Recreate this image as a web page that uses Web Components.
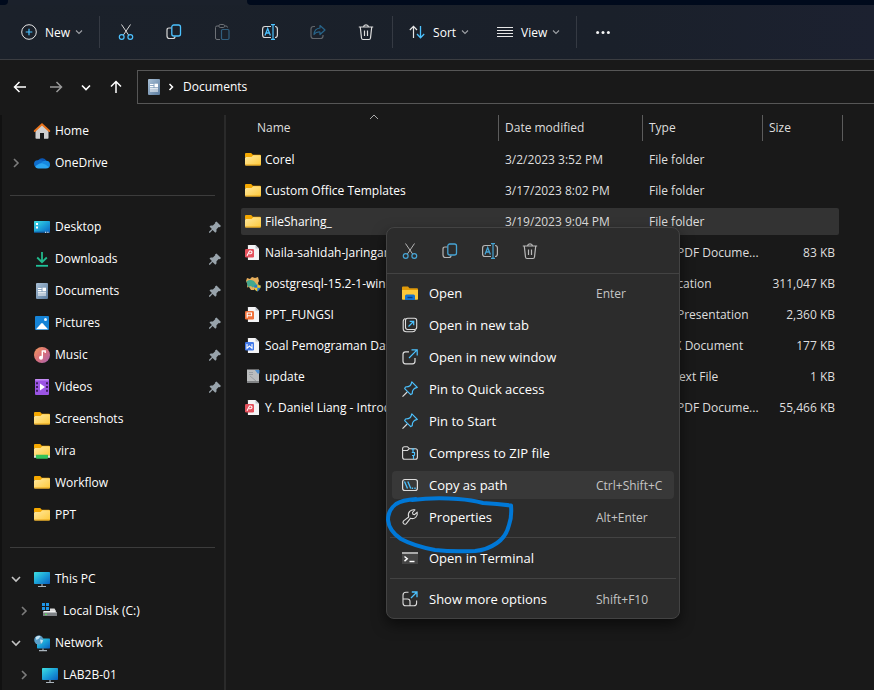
<!DOCTYPE html>
<html lang="en">
<head>
<meta charset="utf-8">
<title>Documents</title>
<style>
html, body { height: 100%; }
body { margin: 0; background: #191919; color: #fff; font: 12px/16px "Open Sans", "Noto Sans", sans-serif; overflow: hidden; }
</style>
</head>
<body>
<explorer-window>
  <tab-strip slot="tabs"></tab-strip>
  <command-bar slot="commands">
    <command-button icon="new" chevron>New</command-button>
    <bar-divider></bar-divider>
    <command-button icon="cut" label="Cut"></command-button>
    <command-button icon="copy" label="Copy"></command-button>
    <command-button icon="paste" label="Paste" dim></command-button>
    <command-button icon="rename" label="Rename"></command-button>
    <command-button icon="share" label="Share" dim></command-button>
    <command-button icon="trash" label="Delete"></command-button>
    <bar-divider></bar-divider>
    <command-button icon="sort" chevron>Sort</command-button>
    <command-button icon="view" chevron>View</command-button>
    <bar-divider></bar-divider>
    <command-button icon="more" label="See more"></command-button>
  </command-bar>
  <address-bar slot="address">Documents</address-bar>
  <nav-pane slot="nav">
    <nav-item icon="home">Home</nav-item>
    <nav-item icon="onedrive" state="closed">OneDrive</nav-item>
    <nav-rule></nav-rule>
    <nav-item icon="desktop" pinned>Desktop</nav-item>
    <nav-item icon="download" pinned>Downloads</nav-item>
    <nav-item icon="document" pinned>Documents</nav-item>
    <nav-item icon="picture" pinned>Pictures</nav-item>
    <nav-item icon="music" pinned>Music</nav-item>
    <nav-item icon="video" pinned>Videos</nav-item>
    <nav-item icon="folder">Screenshots</nav-item>
    <nav-item icon="shared">vira</nav-item>
    <nav-item icon="folder">Workflow</nav-item>
    <nav-item icon="folder">PPT</nav-item>
    <nav-rule></nav-rule>
    <nav-item icon="pc" state="open">This PC</nav-item>
    <nav-item icon="disk" state="closed" nested>Local Disk (C:)</nav-item>
    <nav-item icon="network" state="open">Network</nav-item>
    <nav-item icon="pc" state="closed" nested>LAB2B-01</nav-item>
  </nav-pane>
  <file-list></file-list>
  <context-menu slot="overlay">
    <menu-tool slot="tools" icon="cut" label="Cut"></menu-tool>
    <menu-tool slot="tools" icon="copy" label="Copy"></menu-tool>
    <menu-tool slot="tools" icon="rename" label="Rename"></menu-tool>
    <menu-tool slot="tools" icon="trash" label="Delete"></menu-tool>
    <menu-rule></menu-rule>
    <menu-item icon="openfolder" keys="Enter">Open</menu-item>
    <menu-item icon="newtab">Open in new tab</menu-item>
    <menu-item icon="newwindow">Open in new window</menu-item>
    <menu-item icon="pin">Pin to Quick access</menu-item>
    <menu-item icon="pin">Pin to Start</menu-item>
    <menu-item icon="zip">Compress to ZIP file</menu-item>
    <menu-item icon="path" keys="Ctrl+Shift+C" active>Copy as path</menu-item>
    <menu-item icon="wrench" keys="Alt+Enter">Properties</menu-item>
    <menu-rule></menu-rule>
    <menu-item icon="terminal">Open in Terminal</menu-item>
    <menu-rule></menu-rule>
    <menu-item icon="moreoptions" keys="Shift+F10">Show more options</menu-item>
    <ink-loop slot="ink"></ink-loop>
  </context-menu>
</explorer-window>

<script>
const B = '#4cc2ff';
const folder = '<g transform="translate(0 -1)"><path d="M0 3q0-1 1-1h5.2l1.6 1.7H15q1 0 1 1V6H0z" fill="#f5a800"/><path d="M0 13.5V7q0-1 1-1h5.5L8.3 4.3H15q1 0 1 1v8.2q0 1-1 1H1q-1 0-1-1z" fill="url(#f)"/><path d="M0 13.6h16q0 .9-1 .9H1q-1 0-1-.9z" fill="#e3a21a"/></g><defs><linearGradient id="f" x2="1" y2="1"><stop stop-color="#ffe9a2"/><stop offset="1" stop-color="#fdc93a"/></linearGradient></defs>';
const sheet = (c, mark) => `<path d="M3.500 0h7L14 3.500V14.400q0 .6-.6.6H3.500q-.6 0-.6-.6V.6Q2.900 0 3.500 0z" fill="#f4f4f6"/><path d="M10.500 0 14 3.500h-3.500z" fill="#bfc3ca"/><rect y="4" width="9" height="8.500" rx="1.300" fill="${c}"/><g fill="none" stroke="#fff" stroke-width="1.100">${mark}</g>`;
const screen = (x, y, w, h, id) => `<rect x="${x}" y="${y}" width="${w}" height="${h}" rx=".7" fill="url(#${id})"/><defs><linearGradient id="${id}" x2="1" y2="1"><stop stop-color="#3fe0e2"/><stop offset=".5" stop-color="#1ba1d8"/><stop offset="1" stop-color="#0a5fc0"/></linearGradient></defs>`;
const ICONS = {
  new: `<circle cx="8" cy="8" r="7.300" stroke="#e6e6e6"/><path d="M8 4.700v6.600M4.700 8h6.600" stroke="${B}" stroke-width="1.200"/>`,
  cut: `<path d="M3.500.5 10.600 11M12.500.5 5.400 11" stroke="#d8d8d8"/><circle cx="3.700" cy="13" r="2.400" stroke="${B}" stroke-width="1.200"/><circle cx="12.300" cy="13" r="2.400" stroke="${B}" stroke-width="1.200"/>`,
  copy: `<path d="M5.500 4H3Q1 4 1 6v6q0 2.500 2.500 2.500H7q2 0 2-2" stroke="#d8d8d8" stroke-width="1.200"/><rect x="5.800" y="1" width="8.700" height="11" rx="2" stroke="${B}" stroke-width="1.300"/>`,
  paste: `<path d="M6 15.500H3q-1.500 0-1.500-1.500V3.500Q1.500 2 3 2h2M10.500 2H12q1.500 0 1.500 1.500" stroke="#6d7176"/><rect x="5" y=".5" width="5.500" height="3" rx="1.200" stroke="#6d7176"/><rect x="7.500" y="5.500" width="7.500" height="10" rx="1.200" stroke="#315e7d" stroke-width="1.200"/>`,
  rename: `<path d="M9 2.500H3Q.6 2.500.6 5v6Q.6 13.500 3 13.500h6M13 2.500q2.400 0 2.400 2.500v6q0 2.500-2.400 2.500" stroke="#d8d8d8" stroke-width="1.200"/><path d="M9 .6h4M11 .6v14.800M9 15.400h4" stroke="${B}" stroke-width="1.200"/><path d="m3 11.500 2.700-7 2.700 7M4 9h3.400" stroke="${B}" stroke-width="1.300"/>`,
  share: `<path d="M5 2.500H3.500Q1 2.500 1 5v7q0 2.500 2.500 2.500h7Q13 14.500 13 12v-1" stroke="#62666b" stroke-width="1.200"/><path d="M10 1.500 15 6l-5 4.500V8q-4-.3-6 2.500.4-6 6-6.500z" stroke="#28658a" stroke-width="1.200" stroke-linejoin="round"/>`,
  trash: `<path d="M.8 3h14.400M5.500 2.800Q5.800.8 8 .8t2.500 2M2.300 3.200 3.500 14q.2 1.500 1.500 1.500h6q1.300 0 1.500-1.500l1.200-10.800M6.500 6.500v5.500M9.500 6.500v5.500" stroke="#dedede" stroke-width="1.200"/>`,
  sort: `<path d="M4.500 14V2.500M.8 6l3.700-3.700L8 6" stroke="#e6e6e6" stroke-width="1.200"/><path d="M11.500 2v11.500M8 10l3.500 3.700L15.200 10" stroke="${B}" stroke-width="1.300"/>`,
  view: '<path d="M0 3.500h16M0 6.500h16M0 9.500h16M0 12.500h16" stroke="#e6e6e6"/>',
  more: '<g fill="#f4f4f4"><circle cx="2.600" cy="8.500" r="1.500"/><circle cx="8" cy="8.500" r="1.500"/><circle cx="13.400" cy="8.500" r="1.500"/></g>',
  back: '<path d="M14 8H3M7.500 3 2.500 8l5 5" stroke="#fff" stroke-width="1.500"/>',
  forward: '<path d="M2 8h11M8.500 3l5 5-5 5" stroke="#9a9a9a" stroke-width="1.500"/>',
  down: '<path d="m4 6.500 4 4 4-4" stroke="#fff" stroke-width="1.600"/>',
  up: '<path d="M8 14V3M3 7.500l5-5 5 5" stroke="#fff" stroke-width="1.500"/>',
  crumb: '<path d="m6.500 5 3 3-3 3" stroke="#fff" stroke-width="1.500"/>',
  closed: '<path d="m6 4 4 4-4 4" stroke="#7c7c7c" stroke-width="1.600"/>',
  open: '<path d="m4 6 4 4 4-4" stroke="#c4c4c4" stroke-width="1.600"/>',
  chevron: '<path d="m5 6.500 3 3 3-3" stroke="#9ea1a6" stroke-width="1.100"/>',
  caret: '<path d="m4 10 4-4 4 4" stroke="#aaa"/>',
  thumb: '<path d="M9.500 2.500 14 7l-1.300 1.200-1-.2-2.200 2.300v2.200L8.300 13.700 5.600 11 3 13.700H2v-1L4.900 10 2.500 7.600 3.700 6.500h2.200l2.300-2.200-.2-.8z" fill="#98a3ab"/>',
  home: '<path d="M1.500 7.500 8 1.500l6.500 6V15q0 .8-.8.8H10V10H6v5.800H2.300q-.8 0-.8-.8z" fill="#cfcfcf"/><path d="M.7 8 8 1.300 15.300 8" stroke="#e8731c" stroke-width="1.900" stroke-linecap="round"/>',
  onedrive: '<path d="M4 9.500A3.800 3.800 0 0 1 4.300 5 5 5 0 0 1 12.500 6z" fill="#0a57b5"/><path d="M3.500 5.300Q0 5.500 0 9q0 2.500 2.500 4L13 8 9 6Q6 4.300 3.500 5.300z" fill="#0f6dcc"/><path d="M12.200 5.800Q16 6 16 9.800T12 13L7 8q2-2.500 5.200-2.200z" fill="#1688e0"/><path d="M1.200 11.800Q5 7.500 8 8.300T15 12q-1 1.500-3.300 1.500H4q-1.800 0-2.800-1.700z" fill="#2ba6f2"/>',
  desktop: screen(0, 2, 16, 12, 'd') + '<path d="M2 4h2v2H2zM2 7.500h2v2H2z" fill="#fff"/><path d="M0 12.700h16V14H0z" fill="#12508c"/><path d="M11 12.800h1.200v1H11zM13.300 12.800h1.200v1h-1.200z" fill="#fff"/>',
  download: '<path d="M8 1v9.500M3.200 6.500 8 11.200l4.800-4.700" stroke="#22b98c" stroke-width="1.800"/><path d="M2 14.800h12" stroke="#1fc29a" stroke-width="1.800"/>',
  document: '<rect x="2" width="12" height="16" rx="1" fill="url(#g)"/><path d="M4 5.500h3.500M4 7.700h3.500M4 9.800h8M4 12h8" stroke="#fff" stroke-width="1.200"/><path d="M8.500 4.700H12v3.600H8.500z" fill="#fff"/><defs><linearGradient id="g" x2="1" y2="1"><stop stop-color="#a9c0d6"/><stop offset="1" stop-color="#5b7c9f"/></linearGradient></defs>',
  picture: '<rect x="1" y="1" width="14" height="14" rx="1" fill="#1583d6"/><path d="M2 14.300 7.200 8.500q.8-.8 1.600 0l5.200 5.800z" fill="#fff"/><circle cx="11.500" cy="4.500" r="1.500" fill="#e8f6ff"/>',
  music: '<circle cx="8" cy="8" r="8" fill="url(#m)"/><path d="M8.300 3.500v7M8.300 4h2.900v2" stroke="#fff" stroke-width="1.400"/><circle cx="7" cy="10.800" r="2" fill="#fff"/><defs><linearGradient id="m" x2="1" y2="1"><stop stop-color="#f29a5c"/><stop offset=".5" stop-color="#d9707a"/><stop offset="1" stop-color="#a763b5"/></linearGradient></defs>',
  video: '<rect x="1" width="14" height="16" rx="1" fill="#9b54e4"/><path d="M1 1q0-1 1-1h12q1 0 1 1v.6H1z" fill="#c58cf5"/><g fill="#3f2060"><path d="M2 3.200h2v2H2zM2 7h2v2H2zM2 10.800h2v2H2zM12 3.200h2v2h-2zM12 7h2v2h-2zM12 10.800h2v2h-2z"/></g><path d="m6 4.500 5 3.500-5 3.500z" fill="#fff"/>',
  folder,
  shared: folder + '<path d="M0 12.500h16v2.300H0z" fill="#d7e7db"/><path d="M2 11.700h12v3.300q0 .8-.8.800H2.800q-.8 0-.8-.8z" fill="#33c15a"/>',
  pc: screen(0, 1, 16, 12, 'p') + '<path d="M8 13v2.500M4 15.500h8" stroke="#aab4bd" stroke-width="1.200"/>',
  disk: '<path d="M0 0h3v3H0zM4 0h3v3H4zM0 4h3v3H0zM4 4h3v3H4z" fill="#1e96e8"/><path d="M1.500 8h12L15 10H1z" fill="#f0f0f0"/><path d="M8 5.500h4.500L14 8H8z" fill="#dcdcdc"/><rect x="1" y="9.500" width="14" height="3.500" rx=".6" fill="#7d8185"/><path d="M3 11.300h2" stroke="#54e05a" stroke-width="1.200"/>',
  network: screen(3, 3.5, 13, 10, 'n') + '<path d="M9 13.500v2M5 15.600h8" stroke="#aab4bd" stroke-width="1.100"/><circle cx="4.800" cy="5" r="4.600" fill="#5a9fc9"/><path d="M1.500 2.500q2-2.300 5-1.500L5 3.500 2.500 5zM6 4.500l3 .5q0 2.500-2 3.700z" fill="#c5e3f2"/>',
  pdf: sheet('#e4505c', '<path d="M2 10.800 4.500 6h1.200Q7 6 7 7.200T5.700 8.700H4"/>'),
  ppt: sheet('#f0713a', '<path d="M2.200 10.800V6h4.300v2.800H2.500"/>'),
  word: sheet('#4178e8', '<path d="M2 6v4.300L4.500 8 7 10.300V6"/>'),
  postgres: '<path d="M2 2 5 3l2-2 3 1 3-1 1 4-1 2 1 3-3 1-2 3H6l-2-3-2 .5.500-3.500L1 5z" fill="#e6ae5c"/><path d="M1.500 5.500Q5 3 9 5l3 4-2.500 1.500-2 1L6 10l-3 1z" fill="#43a88d"/><path d="M9 9.500q2.200 0 3.300-1 1.200 1 3.300 1 0 4.500-3.300 6-3.300-1.500-3.300-6z" fill="#2478cf"/><path d="M12.300 8.500q1.200 1 3.300 1v2.300h-3.300zM9.100 11.800h3.200v3.700Q9.800 14.500 9.100 11.800z" fill="#f6c928"/>',
  text: '<path d="M2 .5h12V14H2z" fill="#bbbdbe"/><path d="M4 3.500h4M4 5.500h4M5 7l6 5" stroke="#9a9ea1"/><path d="M10 1h4.500v3.500h-2z" fill="#4e8fd0"/><path d="M2 12h12v2H2z" fill="#808284"/>',
  openfolder: '<path d="M0 2.500q0-1 1-1h5l1.500 1.800H15q1 0 1 1V6H0z" fill="#e09a0a"/><path d="M0 5h16v9q0 .8-.8.800H.8Q0 14.800 0 14z" fill="#fdc93a"/><path d="M3 15V11q0-1.500 1.500-1.500h7Q13 9.500 13 11v4z" fill="#1673cd"/><path d="M5.500 12.500h5" stroke="#0a3f80" stroke-width="1.300"/>',
  newtab: `<path d="M3.500 1.500Q1.200 2 1.200 4.500v7q0 3.300 3.300 3.300h6q2.300 0 3-1.800" stroke="#ddd" stroke-width="1.100"/><rect x="3.500" y="1.300" width="11.200" height="11.200" rx="2.200" stroke="#ddd" stroke-width="1.100"/><path d="m6.500 9.500 5-5M7.700 4.300h4v4" stroke="${B}" stroke-width="1.200"/>`,
  newwindow: `<path d="M7 2.800H3.500Q1 2.800 1 5.300v7q0 2.500 2.500 2.500h7q2.500 0 2.500-2.500V9" stroke="#ddd" stroke-width="1.200"/><path d="M7 9 14.800 1.200M9.500.9h5.700v5.700" stroke="${B}" stroke-width="1.200"/>`,
  pin: `<path d="m5.200 11-4.700 4.600" stroke="#ddd" stroke-width="1.100"/><path d="M9.800.9q-.6 2.800-1.800 3.800T3.500 6L2.700 7.600l6 6 1.500-.9q0-3 1.300-4.400t3.800-1.900z" stroke="${B}" stroke-width="1.200" stroke-linejoin="round"/>`,
  zip: `<path d="M.6 12.300V3.700q0-2 2-2h2.800l2 2H13.400q2 0 2 2v6.600q0 2-2 2H2.600q-2 0-2-2zM.6 5.500h4.800l2-1.800" stroke="#ddd" stroke-width="1.100"/><path d="M9.500 4h3M11 4v3.500M9.800 7.500H13M12.500 7.500v3M10 10.500h2.500M11.500 10.500v3.500" stroke="${B}" stroke-width="1.200"/>`,
  path: `<rect x=".6" y="2.500" width="14.800" height="11" rx="2.200" stroke="#ddd" stroke-width="1.200"/><path d="m2.500 4.500 3 7M5.800 4.500l3 7" stroke="${B}" stroke-width="1.300"/><path d="M9.700 10.500h1.400V12H9.700zM12.300 10.500h1.400V12h-1.400z" fill="${B}"/>`,
  wrench: '<path d="M6.700 8Q5.600 4.800 7.700 2.400 9.900.2 12.900.9L10.500 3.500l.4 1.700 1.700.4 2.600-2.400q.7 3-1.500 5.100-2.300 2-5.300 1L4.300 14.600q-1.400 1.300-2.800.1-1.200-1.400.1-2.800z" stroke="#ddd" stroke-width="1.100" stroke-linejoin="round"/>',
  terminal: '<rect y="2" width="16" height="12" fill="#454545"/><path d="M0 2h16v2H0z" fill="#aaa"/><path d="m2.500 6.500 2.700 2.300-2.700 2.300" stroke="#fff" stroke-width="1.500"/><path d="M7.500 11.500h5" stroke="#fff" stroke-width="1.400"/>',
  moreoptions: `<path d="M6.500 1.300H4Q1 1.300 1 4.300V12q0 2.800 2.800 2.800h8q2.800 0 2.800-2.800V9.500M1 8h4.500Q8 8 8 10.500v4" stroke="#ddd" stroke-width="1.100"/><path d="M9 7 14.500 1.500M9.800 1h5.200v5.200" stroke="${B}" stroke-width="1.300"/>`
};

const define = (name, render) => customElements.define(name, class extends HTMLElement {
  constructor() { super(); this.attachShadow({ mode: 'open' }); }
  connectedCallback() { this.shadowRoot.innerHTML = render(this); }
});
const icon = name => `<app-icon name="${name}"></app-icon>`;
const attr = (el, name) => el.getAttribute(name) || '';
const RESET = '* { box-sizing: border-box; } button, a { font: inherit; color: inherit; background: none; border: 0; padding: 0; margin: 0; text-decoration: none; text-align: left; }';

define('app-icon', el => `<style>:host { display: block; flex: none; width: 16px; height: 16px; } svg { display: block; overflow: visible; }</style>
  <svg width="16" height="16" viewBox="0 0 16 16" fill="none" aria-hidden="true">${ICONS[attr(el, 'name')]}</svg>`);

define('explorer-window', () => `<style>
  :host { display: grid; grid-template: auto auto auto minmax(0, 1fr) / 226px minmax(0, 1fr); height: 100vh; position: relative; overflow: hidden; background: #191919; }
  .wide { grid-column: 1 / -1; }
  .nav { display: flex; min-height: 0; }
  .main { min-width: 0; padding: 2px 31px 0 15px; }
  </style>
  <div class="wide"><slot name="tabs"></slot></div>
  <div class="wide"><slot name="commands"></slot></div>
  <div class="wide"><slot name="address"></slot></div>
  <div class="nav"><slot name="nav"></slot></div>
  <main class="main"><slot></slot></main>
  <slot name="overlay"></slot>`);

define('tab-strip', () => `<style>
  :host { display: flex; height: 5px; background: #1b212b; }
  i { background: #000a1c; }
  .a { width: 8px; border-radius: 0 0 4px 0; }
  .tab { width: 239px; background: none; }
  .b { flex: 1; border-radius: 0 0 0 4px; }
  </style><i class="a"></i><i class="tab"></i><i class="b"></i>`);

define('command-bar', () => `<style>
  :host { display: flex; align-items: center; gap: 4px; height: 55px; box-sizing: border-box; padding-left: 9px; border-bottom: 1px solid #3b3d41; background: linear-gradient(90deg, #1b212a, #1a202a 70%, #1c2130); }
  </style><slot></slot>`);

define('bar-divider', () => `<style>:host { display: block; width: 1px; height: 32px; background: #353a43; }</style>`);

define('command-button', el => `<style>${RESET}
  :host { display: block; }
  button { display: flex; align-items: center; justify-content: center; height: 36px; min-width: 44px; ${el.hasAttribute('chevron') ? 'padding: 0 8px 0 12px;' : ''} }
  span { margin: 0 1px 0 8px; padding-top: 1px; font-weight: 500; }
  </style>
  <button ${attr(el, 'label') ? `aria-label="${attr(el, 'label')}"` : ''}${el.hasAttribute('dim') ? ' disabled' : ''}>${icon(attr(el, 'icon'))}${el.hasAttribute('chevron') ? '<span><slot></slot></span>' + icon('chevron') : ''}</button>`);

define('address-bar', () => `<style>${RESET}
  :host { display: flex; align-items: center; padding: 10px 0 9px 2px; }
  button { display: flex; align-items: center; justify-content: center; width: 36px; height: 34px; flex: none; }
  button.slim { width: 24px; }
  nav { flex: 1; display: flex; align-items: center; height: 34px; margin-left: 3px; padding-left: 8px; border: 1px solid #565656; border-right: 0; }
  a { margin-left: 4px; }
  app-icon + app-icon { margin-left: 1px; }
  </style>
  <button aria-label="Back">${icon('back')}</button>
  <button aria-label="Forward" disabled>${icon('forward')}</button>
  <button class="slim" aria-label="Recent locations">${icon('down')}</button>
  <button aria-label="Up">${icon('up')}</button>
  <nav aria-label="Path">${icon('document')}${icon('crumb')}<a href="#documents"><slot></slot></a></nav>`);

define('nav-pane', () => `<style>
  :host { display: block; flex: 1; min-width: 0; margin-top: 2px; border-left: 2px solid #111; border-right: 2px solid #2a2a2a; overflow: hidden; }
  </style><nav aria-label="Folders"><slot></slot></nav>`);

define('nav-rule', () => `<style>:host { display: flex; align-items: center; height: 32px; padding: 0 9px 0 8px; } hr { flex: 1; margin: 0; border: 0; border-top: 1px solid #3c3c3c; }</style><hr>`);

define('nav-item', el => `<style>${RESET}
  :host { display: block; }
  a { display: flex; align-items: center; height: 32px; padding: 0 1px 0 ${el.hasAttribute('nested') ? 14 : 6}px; }
  .twist { width: 16px; margin-right: 10px; flex: none; }
  .text { flex: 1; margin-left: 5px; white-space: nowrap; }
  </style>
  <a href="#"><span class="twist">${attr(el, 'state') ? icon(attr(el, 'state')) : ''}</span>${icon(attr(el, 'icon'))}<span class="text"><slot></slot></span>${el.hasAttribute('pinned') ? icon('thumb') : ''}</a>`);

const FILES = [
  ['folder', 'Corel', '3/2/2023 3:52 PM', 'File folder', ''],
  ['folder', 'Custom Office Templates', '3/17/2023 8:02 PM', 'File folder', ''],
  ['folder', 'FileSharing_', '3/19/2023 9:04 PM', 'File folder', '', true],
  ['pdf', 'Naila-sahidah-Jaringan', '', 'WPS PDF Docume...', '83 KB'],
  ['postgres', 'postgresql-15.2-1-windows', '', 'Application', '311,047 KB'],
  ['ppt', 'PPT_FUNGSI', '', 'WPS Presentation', '2,360 KB'],
  ['word', 'Soal Pemograman Dasar', '', 'DOCX Document', '177 KB'],
  ['text', 'update', '', 'TXT Text File', '1 KB'],
  ['pdf', 'Y. Daniel Liang - Introd', '', 'WPS PDF Docume...', '55,466 KB']
];
define('file-list', () => `<style>${RESET}
  :host { display: block; }
  table { width: 100%; table-layout: fixed; border-collapse: separate; border-spacing: 0; }
  th, td { padding: 0; font-weight: 400; text-align: left; white-space: nowrap; }
  .date { width: 144px; } .type { width: 120px; } .size { width: 80px; }
  th { position: relative; height: 26px; border-right: 1px solid #5c5c5c; color: #dedede; padding-left: 6px; }
  th:first-child { padding-left: 16px; }
  th app-icon { position: absolute; left: calc(50% - 4px); top: -6px; }
  thead::after { content: ""; display: block; height: 3px; }
  td { height: 31px; color: #dedede; }
  td > div { display: flex; align-items: center; height: 27px; padding-left: 6px; }
  td:first-child { color: #fff; }
  td:first-child > div { padding-left: 4px; gap: 4px; }
  td:last-child { padding-right: 4px; }
  td:last-child > div { justify-content: flex-end; padding-right: 4px; }
  .selected div { background: #333; }
  .selected td:first-child div { border-radius: 2px 0 0 2px; }
  .selected td:last-child div { border-radius: 0 2px 2px 0; }
  </style>
  <table>
    <thead><tr><th>Name${icon('caret')}</th><th class="date">Date modified</th><th class="type">Type</th><th class="size">Size</th></tr></thead>
    <tbody>${FILES.map(f => `<tr${f[5] ? ' class="selected"' : ''}><td><div>${icon(f[0])}<span>${f[1]}</span></div></td>${f.slice(2, 5).map(t => `<td><div>${t}</div></td>`).join('')}</tr>`).join('')}</tbody>
  </table>`);

define('context-menu', () => `<style>
  :host { position: absolute; left: 386px; top: 227px; width: 294px; box-sizing: border-box; padding-bottom: 3px; border: 1px solid #434343; border-radius: 8px; background: #2c2c2c; box-shadow: 0 6px 14px #0008; font-size: 13px; line-height: 20px; }
  .tools { display: flex; height: 45px; padding-left: 3px; align-items: center; }
  </style>
  <div class="tools"><slot name="tools"></slot></div>
  <div role="menu"><slot></slot></div>
  <slot name="ink"></slot>`);

define('menu-tool', el => `<style>${RESET} :host { display: block; } button { display: flex; align-items: center; justify-content: center; width: 40px; height: 36px; opacity: .8; }</style>
  <button aria-label="${attr(el, 'label')}">${icon(attr(el, 'icon'))}</button>`);

define('menu-rule', () => `<style>:host { display: block; height: 1px; margin: 4px 3px; background: #434343; } :host(:first-of-type) { margin: 0 0 3px; }</style>`);

define('menu-item', el => `<style>${RESET}
  :host { display: block; padding: 2px 5px; }
  button { display: grid; grid-template-columns: 16px 1fr 78px; align-items: center; width: 100%; height: 28px; padding-left: 10px; border-radius: 4px; background: ${el.hasAttribute('active') ? '#383838' : 'none'}; }
  .text { padding-left: 11px; white-space: nowrap; }
  kbd { font: inherit; font-size: 12px; padding-top: 1px; color: #c5c5c5; white-space: nowrap; }
  </style>
  <button role="menuitem">${icon(attr(el, 'icon'))}<span class="text"><slot></slot></span><kbd>${attr(el, 'keys')}</kbd></button>`);

define('ink-loop', () => `<style>:host { position: absolute; left: -1px; top: 267px; pointer-events: none; } svg { display: block; overflow: visible; }</style>
  <svg width="130" height="60" viewBox="386 495 130 60" fill="none" aria-hidden="true"><path d="M412 500Q434 497 458 499Q472 500 483 503Q498 504 511 505.500Q512 517 509 525Q506 537 497 543Q487 550 475 551Q452 552 435 550Q414 546 401 539Q389 531 388 520Q388 510 396 504Q402 500 416 499" stroke="#0078d7" stroke-width="4" stroke-linecap="round" stroke-linejoin="round"/></svg>`);
</script>
</body>
</html>
